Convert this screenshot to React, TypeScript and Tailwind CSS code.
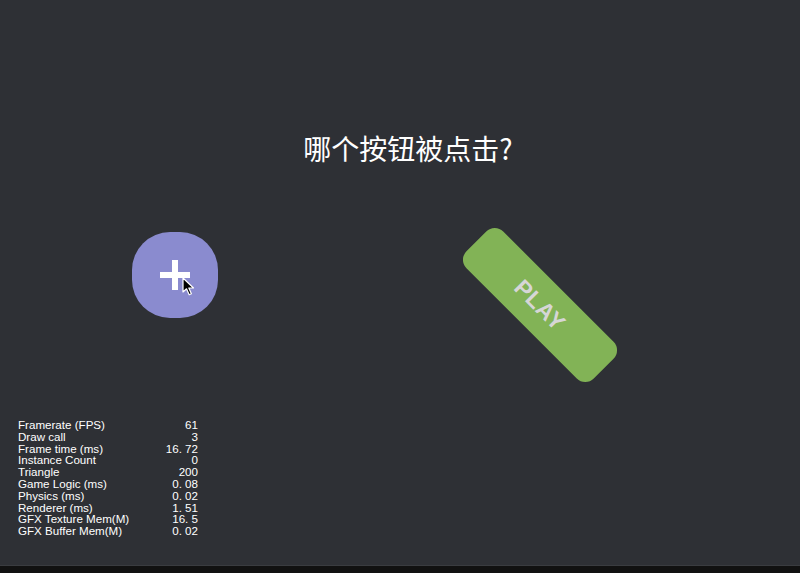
import React from 'react';

const STATS: [string, string][] = [
  ['Framerate (FPS)', '61'],
  ['Draw call', '3'],
  ['Frame time (ms)', '16. 72'],
  ['Instance Count', '0'],
  ['Triangle', '200'],
  ['Game Logic (ms)', '0. 08'],
  ['Physics (ms)', '0. 02'],
  ['Renderer (ms)', '1. 51'],
  ['GFX Texture Mem(M)', '16. 5'],
  ['GFX Buffer Mem(M)', '0. 02'],
];

export default function App() {
  return (
    <div className="w-[800px] h-[573px] flex flex-col bg-[#111111] overflow-hidden">
      {/* scene */}
      <div className="relative h-[566px] bg-[#2e3035] border-b border-[#3a3c40] flex flex-col">
        <h1
          className="mt-[128px] pl-[16px] text-center text-[28px] leading-[40px] text-white"
          style={{ fontFamily: '"Noto Sans CJK SC", "Noto Sans", sans-serif' }}
        >
          哪个按钮被点击?
        </h1>

        {/* plus button */}
        <div className="absolute left-[132px] top-[232px] w-[86px] h-[86px] rounded-[38px] bg-[#8a8bcf] flex items-center justify-center">
          <svg width="32" height="32" viewBox="0 0 32 32">
            <rect x="13" y="1" width="6" height="30" fill="#ffffff" />
            <rect x="1" y="13" width="30" height="6" fill="#ffffff" />
          </svg>
          <svg className="absolute left-[50px] top-[45px]" width="14" height="20" viewBox="0 0 14 20">
            <path d="M1 1 L1 15 L4.5 11.8 L7.2 17.8 L9.4 16.8 L6.8 11 L11.5 11 Z" fill="#000" stroke="#fff" strokeWidth="1.2" strokeLinejoin="round" />
          </svg>
        </div>

        {/* play button */}
        <div className="absolute left-[450px] top-[279px] w-[180px] h-[52px] rotate-45 rounded-[12px] bg-[#82b356] flex items-center justify-center">
          <span
            className="text-[23px] font-bold text-[#d6d6d6] tracking-[0.5px]"
            style={{ fontFamily: '"Liberation Sans", Arial, sans-serif' }}
          >
            PLAY
          </span>
        </div>

        {/* stats */}
        <div
          className="mt-auto mb-[28px] ml-[18px] w-[180px] text-[11.6px] leading-[11.8px] text-white"
          style={{ fontFamily: '"Liberation Sans", Arial, sans-serif' }}
        >
          {STATS.map(([label, value]) => (
            <div key={label} className="flex justify-between">
              <span>{label}</span>
              <span>{value}</span>
            </div>
          ))}
        </div>
      </div>
    </div>
  );
}
